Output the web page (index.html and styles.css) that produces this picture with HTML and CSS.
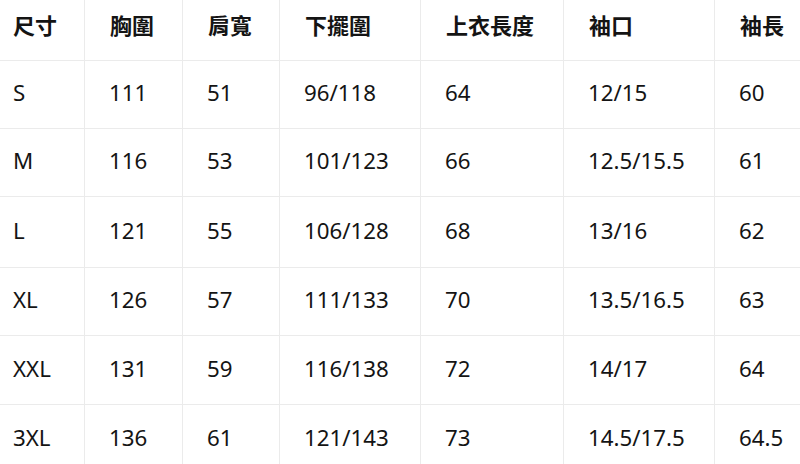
FILE: index.html
```html
<!DOCTYPE html>
<html lang="zh-Hant">
<head>
<meta charset="utf-8">
<title>尺寸表</title>
<link rel="stylesheet" href="styles.css">
</head>
<body>
<div class="table">
  <div class="cell head first">尺寸</div>
  <div class="cell head">胸圍</div>
  <div class="cell head">肩寬</div>
  <div class="cell head">下擺圍</div>
  <div class="cell head">上衣長度</div>
  <div class="cell head">袖口</div>
  <div class="cell head">袖長</div>

  <div class="cell first">S</div>
  <div class="cell">111</div>
  <div class="cell">51</div>
  <div class="cell">96/118</div>
  <div class="cell">64</div>
  <div class="cell">12/15</div>
  <div class="cell">60</div>

  <div class="cell first">M</div>
  <div class="cell">116</div>
  <div class="cell">53</div>
  <div class="cell">101/123</div>
  <div class="cell">66</div>
  <div class="cell">12.5/15.5</div>
  <div class="cell">61</div>

  <div class="cell first">L</div>
  <div class="cell">121</div>
  <div class="cell">55</div>
  <div class="cell">106/128</div>
  <div class="cell">68</div>
  <div class="cell">13/16</div>
  <div class="cell">62</div>

  <div class="cell first">XL</div>
  <div class="cell">126</div>
  <div class="cell">57</div>
  <div class="cell">111/133</div>
  <div class="cell">70</div>
  <div class="cell">13.5/16.5</div>
  <div class="cell">63</div>

  <div class="cell first">XXL</div>
  <div class="cell">131</div>
  <div class="cell">59</div>
  <div class="cell">116/138</div>
  <div class="cell">72</div>
  <div class="cell">14/17</div>
  <div class="cell">64</div>

  <div class="cell first">3XL</div>
  <div class="cell">136</div>
  <div class="cell">61</div>
  <div class="cell">121/143</div>
  <div class="cell">73</div>
  <div class="cell">14.5/17.5</div>
  <div class="cell">64.5</div>
</div>
</body>
</html>
```

FILE: styles.css
```css
html, body {
  margin: 0;
  padding: 0;
  background: #ffffff;
  width: 800px;
  height: 464px;
  overflow: hidden;
}

.table {
  display: grid;
  grid-template-columns: 85px 98px 97px 141px 143px 151px 100px;
  grid-template-rows: 61px 68px 68px 71px 68px 69px 69px;
  font-family: "Noto Sans", "Noto Sans CJK TC", sans-serif;
  font-size: 22.3px;
  color: #141414;
}

.cell {
  box-sizing: border-box;
  border-right: 1px solid #ebebeb;
  border-bottom: 1px solid #ebebeb;
  padding-left: 24px;
  padding-bottom: 2px;
  display: flex;
  align-items: center;
  white-space: nowrap;
  line-height: 1;
}

.cell.first {
  padding-left: 13px;
}

.cell.head {
  font-family: "Noto Sans CJK TC", "Noto Sans", sans-serif;
  font-weight: 700;
  font-size: 22px;
  padding-bottom: 13px;
  padding-left: 25px;
}

.cell.head.first {
  padding-left: 13px;
}
```
